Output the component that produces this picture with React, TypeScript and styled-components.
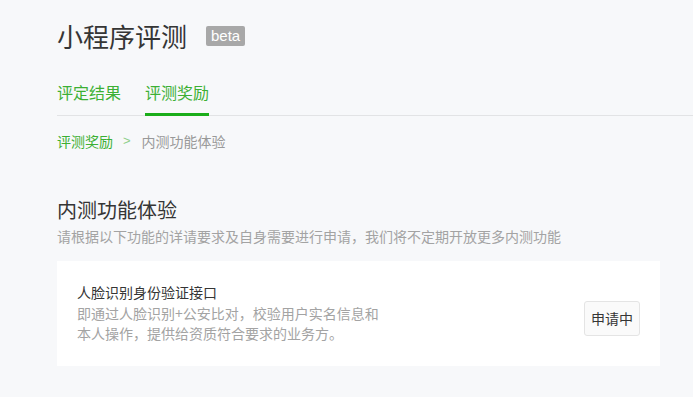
import React from 'react';
import styled, { createGlobalStyle } from 'styled-components';

const GlobalStyle = createGlobalStyle`
  body {
    margin: 0;
    background: #f7f8fa;
    font-family: "Noto Sans CJK SC", "Noto Sans", sans-serif;
  }
`;

const Page = styled.div`
  padding: 18px 0 0 57px;
`;

const TitleRow = styled.div`
  display: flex;
  align-items: center;
  gap: 19px;
  height: 36px;
`;

const Title = styled.h1`
  margin: 0;
  font-size: 26px;
  font-weight: 400;
  color: #353535;
  line-height: 36px;
`;

const Badge = styled.span`
  background: #a8a8a8;
  color: #fff;
  font-family: "Liberation Sans", Arial, sans-serif;
  font-size: 15px;
  line-height: 20px;
  padding: 0 5px;
  border-radius: 2px;
`;

const Tabs = styled.nav`
  display: flex;
  gap: 24px;
  margin-top: 26px;
  border-bottom: 1px solid #e2e3e5;
`;

const Tab = styled.a<{ $active?: boolean }>`
  font-size: 16px;
  line-height: 24px;
  color: #3cb034;
  padding-bottom: 9px;
  margin-bottom: -1px;
  border-bottom: 3px solid ${p => (p.$active ? '#1aad19' : 'transparent')};
  cursor: pointer;
`;

const Crumbs = styled.div`
  display: flex;
  align-items: center;
  margin-top: 15px;
  font-size: 14px;
  line-height: 20px;
  color: #999;
`;

const CrumbLink = styled.a`
  color: #3cb034;
`;

const CrumbSep = styled.span`
  color: #8fcf8a;
  margin: 0 11px 0 10px;
  font-family: "Liberation Sans", sans-serif;
  font-size: 13px;
`;

const Section = styled.section`
  margin-top: 45px;
  margin-right: 33px;
`;

const SectionTitle = styled.h2`
  margin: 0;
  font-size: 20px;
  font-weight: 400;
  color: #353535;
  line-height: 28px;
`;

const SectionDesc = styled.p`
  margin: 2px 0 0;
  font-size: 14px;
  line-height: 20px;
  color: #a3a3a3;
`;

const Card = styled.div`
  margin-top: 15px;
  background: #fff;
  display: flex;
  align-items: center;
  justify-content: space-between;
  padding: 20px 20px 23px 20px;
`;

const CardText = styled.div`
  width: 312px;
`;

const CardTitle = styled.div`
  font-size: 14px;
  line-height: 22px;
  color: #353535;
`;

const CardDesc = styled.div`
  font-size: 14px;
  line-height: 20px;
  color: #a3a3a3;
`;

const Button = styled.button`
  font-family: inherit;
  font-size: 14px;
  color: #353535;
  background: #fafafa;
  border: 1px solid #e4e4e4;
  border-radius: 3px;
  height: 35px;
  padding: 0 6px;
  margin-top: 12px;
`;

export default function App() {
  return (
    <Page>
      <GlobalStyle />
      <TitleRow>
        <Title>小程序评测</Title>
        <Badge>beta</Badge>
      </TitleRow>
      <Tabs>
        <Tab>评定结果</Tab>
        <Tab $active>评测奖励</Tab>
      </Tabs>
      <Crumbs>
        <CrumbLink>评测奖励</CrumbLink>
        <CrumbSep>&gt;</CrumbSep>
        <span>内测功能体验</span>
      </Crumbs>
      <Section>
        <SectionTitle>内测功能体验</SectionTitle>
        <SectionDesc>请根据以下功能的详请要求及自身需要进行申请，我们将不定期开放更多内测功能</SectionDesc>
        <Card>
          <CardText>
            <CardTitle>人脸识别身份验证接口</CardTitle>
            <CardDesc>即通过人脸识别+公安比对，校验用户实名信息和本人操作，提供给资质符合要求的业务方。</CardDesc>
          </CardText>
          <Button>申请中</Button>
        </Card>
      </Section>
    </Page>
  );
}
